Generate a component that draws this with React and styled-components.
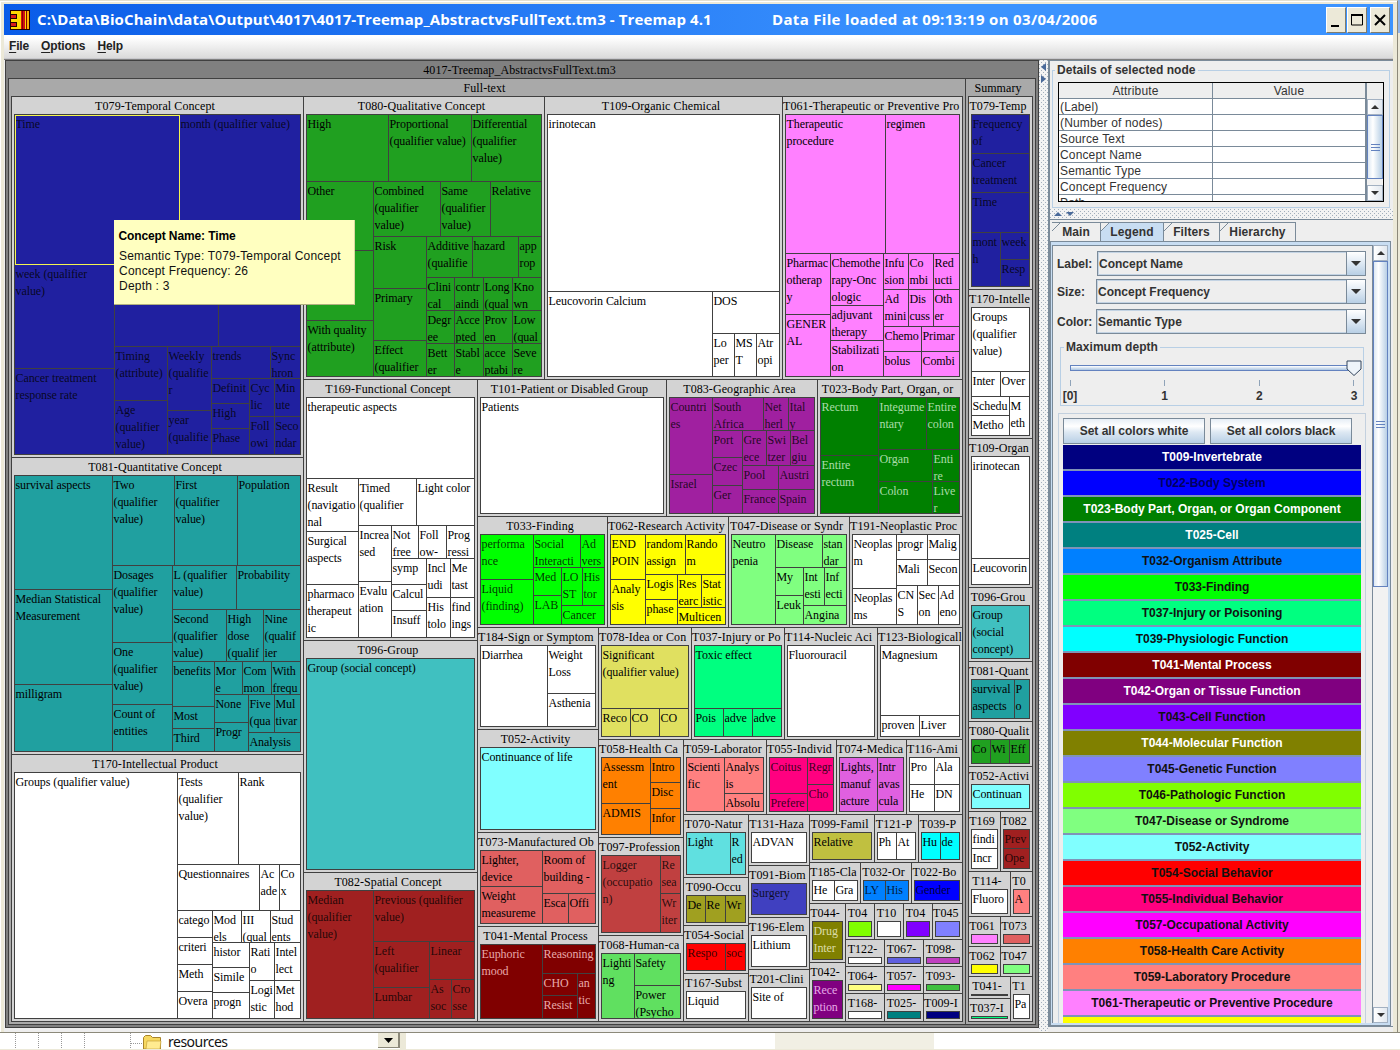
import React from 'react';
import styled, { createGlobalStyle, css } from 'styled-components';

const GlobalStyle = createGlobalStyle`
  * { box-sizing: border-box; }
  body { margin: 0; width: 1400px; height: 1050px; overflow: hidden; background: #ece9d8; }
`;

const LINE = '#404040';
const SANS = '"Liberation Sans", Arial, sans-serif';
const SERIF = '"Liberation Serif", "Times New Roman", serif';

/* ---------- treemap data ---------- */

const split = (dir) => (...items) => {
  const parts = [];
  for (let i = 0; i < items.length - 1; i += 2) parts.push({ size: items[i], node: items[i + 1] });
  parts.push({ node: items[items.length - 1] });
  return { dir, parts };
};
const row = split('row');
const col = split('column');
const group = (title, fill, body = '', ink) => ({ title, fill, body, ink });
const picked = (text) => ({ picked: true, text });

const DIM = 'rgba(0, 0, 0, 0.8)';
const W = '#ffffff';

const fullText = row(
  292, col(
    361, group('T079-Temporal Concept', '#2020a0', col(
      150, row(165, picked('Time'), 'month (qualifier value)'),
      row(
        100, col(104, 'week (qualifier\nvalue)', 'Cancer treatment\nresponse rate'),
        col(
          82, row(104, '', ''),
          row(
            53, col(54, 'Timing\n(attribute)', 'Age\n(qualifier\nvalue)'),
            44, col(64, 'Weekly\n(qualifie\nr', 'year\n(qualifie'),
            col(
              32, row(59, 'trends', 'Sync\nhron'),
              row(
                38, col(25, 'Definit', 25, 'High', 'Phase'),
                col(38, row(25, 'Cyc\nlic', 'Min\nute'), row(25, 'Foll\nowi', 'Seco\nndar'))
              )
            )
          )
        )
      )
    ), DIM),
    297, group('T081-Quantitative Concept', '#20a0a0', row(
      98, col(114, 'survival aspects', 95, 'Median Statistical\nMeasurement', 'milligram'),
      col(
        90, row(62, 'Two\n(qualifier\nvalue)', 63, 'First\n(qualifier\nvalue)', 'Population'),
        row(
          60, col(77, 'Dosages\n(qualifier\nvalue)', 62, 'One\n(qualifier\nvalue)', 'Count of\nentities'),
          col(
            44, row(64, 'L (qualifier\nvalue)', 'Probability'),
            52, row(54, 'Second\n(qualifier\nvalue)', 37, 'High\ndose\n(qualif', 'Nine\n(qualif\nier'),
            row(
              42, col(45, 'benefits', 22, 'Most', 'Third'),
              col(
                33, row(28, 'Mor\ne', 29, 'Com\nmon', 'With\nfrequ'),
                row(
                  34, col(28, 'None', 'Progr'),
                  col(38, row(26, 'Five\n(qua', 'Mul\ntivar'), 'Analysis')
                )
              )
            )
          )
        )
      )
    )),
    group('T170-Intellectual Product', W, row(
      163, 'Groups (qualifier value)',
      col(
        92, row(61, 'Tests\n(qualifier\nvalue)', 'Rank'),
        46, row(82, 'Questionnaires', 20, 'Ac\nade', 'Co\nx'),
        row(
          35, col(27, 'catego', 27, 'criteri', 27, 'Meth', 'Overa'),
          col(
            32, row(29, 'Mod\nels', 29, 'III\n(qual', 'Stud\nents'),
            row(
              37, col(25, 'histor', 25, 'Simile', 'progn'),
              col(38, row(25, 'Rati\no', 'Intel\nlect'), row(25, 'Logi\nstic', 'Met\nhod'))
            )
          )
        )
      )
    ))
  ),
  col(
    283, row(
      241, group('T080-Qualitative Concept', '#20a020', col(
        67, row(82, 'High', 83, 'Proportional\n(qualifier value)', 'Differential\n(qualifier\nvalue)'),
        row(
          67, col(69, 'Other', 70, '', 'With quality\n(attribute)'),
          col(
            55, row(67, 'Combined\n(qualifier\nvalue)', 50, 'Same\n(qualifier\nvalue)', 'Relative'),
            row(
              53, col(52, 'Risk', 52, 'Primary', 'Effect\n(qualifier'),
              col(
                41, row(46, 'Additive\n(qualifie', 46, 'hazard', 'app\nrop'),
                33, row(28, 'Clini\ncal', 29, 'contr\naindi', 29, 'Long\n(qual', 'Kno\nwn'),
                33, row(28, 'Degr\nee', 29, 'Acce\npted', 29, 'Prov\nen', 'Low\n(qual'),
                row(28, 'Bett\ner', 29, 'Stabl\ne', 29, 'acce\nptabi', 'Seve\nre')
              )
            )
          )
        )
      )),
      238, group('T109-Organic Chemical', W, col(
        177, 'irinotecan',
        row(165, 'Leucovorin Calcium', col(42, 'DOS', row(22, 'Lo\nper', 22, 'MS\nT', 'Atr\nopi')))
      )),
      group('T061-Therapeutic or Preventive Pro', '#ff80ff', col(
        139, row(100, 'Therapeutic\nprocedure', 'regimen'),
        row(
          45, col(61, 'Pharmac\notherap\ny', 'GENER\nAL'),
          53, col(52, 'Chemothe\nrapy-Onc\nologic', 35, 'adjuvant\ntherapy', 'Stabilizati\non'),
          col(
            36, row(25, 'Infu\nsion', 25, 'Co\nmbi', 'Red\nucti'),
            37, row(25, 'Ad\nmini', 25, 'Dis\ncuss', 'Oth\ner'),
            25, row(38, 'Chemo', 'Primar'),
            row(38, 'bolus', 'Combi')
          )
        )
      ))
    ),
    row(
      174, col(
        261, group('T169-Functional Concept', W, col(
          81, 'therapeutic aspects',
          row(
            52, col(53, 'Result\n(navigatio\nnal', 53, 'Surgical\naspects', 'pharmaco\ntherapeut\nic'),
            col(
              47, row(58, 'Timed\n(qualifier', 'Light color'),
              row(
                33, col(56, 'Increa\nsed', 'Evalu\nation'),
                col(
                  33, row(27, 'Not\nfree', 28, 'Foll\now-', 'Prog\nressi'),
                  row(
                    35, col(26, 'symp', 26, 'Calcul', 'Insuff'),
                    col(39, row(24, 'Incl\nudi', 'Me\ntast'), row(24, 'His\ntolo', 'find\nings'))
                  )
                )
              )
            )
          )
        )),
        232, group('T096-Group', '#40c0c0', 'Group (social concept)'),
        group('T082-Spatial Concept', '#a02020', row(
          67, 'Median\n(qualifier\nvalue)',
          col(
            51, 'Previous (qualifier\nvalue)',
            row(56, col(46, 'Left\n(qualifier', 'Lumbar'), col(38, 'Linear', row(22, 'As\nsoc', 'Cro\nsse')))
          )
        ), DIM)
      ),
      col(
        137, row(
          189, group('T101-Patient or Disabled Group', W, 'Patients'),
          151, group('T083-Geographic Area', '#a020a0', row(
            43, col(77, 'Countri\nes', 'Israel'),
            col(
              33, row(51, 'South\nAfrica', 25, 'Net\nherl', 'Ital\ny'),
              row(
                30, col(27, 'Port', 28, 'Czec', 'Ger'),
                col(
                  35, row(24, 'Gre\nece', 24, 'Swi\ntzer', 'Bel\ngiu'),
                  24, row(36, 'Pool', 'Austri'),
                  row(36, 'France', 'Spain')
                )
              )
            )
          ), DIM),
          group('T023-Body Part, Organ, or', '#008000', row(
            58, col(58, 'Rectum', 'Entire\nrectum'),
            col(
              52, row(48, 'Integume\nntary', 'Entire\ncolon'),
              32, row(54, 'Organ', 'Enti\nre'),
              row(54, 'Colon', 'Live\nr')
            )
          ), '#a9dca9')
        ),
        111, row(
          130, group('T033-Finding', '#00ff00', row(
            53, col(45, 'performa\nnce', 'Liquid\n(finding)'),
            col(
              33, row(47, 'Social\nInteracti', 'Ad\nvers'),
              row(28, col(28, 'Med', 'LAB'), col(38, row(21, 'LO\nST', 'His\ntor'), 'Cancer'))
            )
          ), DIM),
          121, group('T062-Research Activity', '#ffff00', row(
            35, col(45, 'END\nPOIN', 'Analy\nsis'),
            col(
              40, row(40, 'random\nassign', 'Rando\nm'),
              row(32, col(25, 'Logis', 'phase'), col(33, row(24, 'Res\nearc', 'Stat\nistic'), 'Multicen'))
            )
          )),
          121, group('T047-Disease or Syndr', '#80ff80', row(
            44, 'Neutro\npenia',
            col(
              33, row(47, 'Disease', 'stan\ndar'),
              row(28, col(28, 'My', 'Leuk'), col(38, row(21, 'Int\nesti', 'Inf\necti'), 'Angina'))
            )
          )),
          group('T191-Neoplastic Proc', W, row(
            44, col(54, 'Neoplas\nm', 'Neoplas\nms'),
            col(
              25, row(31, 'progr', 'Malig'),
              26, row(31, 'Mali', 'Secon'),
              row(21, 'CN\nS', 21, 'Sec\non', 'Ad\neno')
            )
          ))
        ),
        row(
          121, col(
            102, group('T184-Sign or Symptom', W, row(67, 'Diarrhea', col(48, 'Weight\nLoss', 'Asthenia'))),
            103, group('T052-Activity', '#80ffff', 'Continuance of life'),
            94, group('T073-Manufactured Ob', '#e06060', row(
              62, col(36, 'Lighter,\ndevice', 'Weight\nmeasureme'),
              col(43, 'Room of\nbuilding -', row(26, 'Esca', 'Offi'))
            )),
            group('T041-Mental Process', '#800000', row(
              62, 'Euphoric\nmood',
              col(29, 'Reasoning', row(35, col(22, 'CHO', 'Resist'), 'an\ntic'))
            ), '#e8aaaa')
          ),
          col(
            112, row(
              93, group('T078-Idea or Con', '#e0e060', col(63, 'Significant\n(qualifier value)', row(29, 'Reco', 29, 'CO', 'CO'))),
              93, group('T037-Injury or Po', '#00ff80', col(63, 'Toxic effect', row(29, 'Pois', 29, 'adve', 'adve'))),
              93, group('T114-Nucleic Aci', W, 'Fluorouracil'),
              group('T123-Biologicall', W, col(70, 'Magnesium', row(39, 'proven', 'Liver')))
            ),
            row(
              85, col(
                98, group('T058-Health Ca', '#ff8000', row(49, col(46, 'Assessm\nent', 'ADMIS'), col(25, 'Intro', 26, 'Disc', 'Infor'))),
                98, group('T097-Profession', '#c04040', row(59, 'Logger\n(occupatio\nn)', col(38, 'Re\nsea', 'Wr\niter')), DIM),
                group('T068-Human-ca', '#60e060', row(33, 'Lighti\nng', col(32, 'Safety', 'Power\n(Psycho')))
              ),
              col(
                75, row(
                  83, group('T059-Laborator', '#ff8080', row(38, 'Scienti\nfic', col(36, 'Analys\nis', 'Absolu'))),
                  70, group('T055-Individ', '#ff0080', row(38, col(36, 'Coitus', 'Prefere'), col(27, 'Regr', 'Cho')), DIM),
                  70, group('T074-Medica', '#e060e0', row(38, 'Lights,\nmanuf\nacture', 'Intr\navas\ncula')),
                  group('T116-Ami', W, col(27, row(25, 'Pro', 'Ala'), row(25, 'He', 'DN')))
                ),
                row(
                  65, col(
                    63, group('T070-Natur', '#60e0e0', row(44, 'Light', 'R\ned')),
                    48, group('T090-Occu', '#a0a020', row(19, 'De', 20, 'Re', 'Wr')),
                    48, group('T054-Social', '#ff0000', row(39, 'Respo', 'soc'), DIM),
                    group('T167-Subst', W, 'Liquid')
                  ),
                  61, col(
                    51, group('T131-Haza', W, 'ADVAN'),
                    52, group('T091-Biom', '#4040c0', 'Surgery', DIM),
                    52, group('T196-Elem', W, 'Lithium'),
                    group('T201-Clini', W, 'Site of')
                  ),
                  col(
                    48, row(
                      65, group('T099-Famil', '#c0c040', 'Relative'),
                      44, group('T121-P', W, row(19, 'Ph', 'At')),
                      group('T039-P', '#00ffff', row(19, 'Hu', 'de'))
                    ),
                    41, row(
                      51, group('T185-Cla', W, row(22, 'He', 'Gra')),
                      51, group('T032-Or', '#0080ff', row(22, 'LY', 'His'), DIM),
                      group('T022-Bo', '#0000ff', 'Gender', DIM)
                    ),
                    row(
                      36, col(
                        59, group('T044-', '#808000', 'Drug\nInter', '#dcdca8'),
                        group('T042-', '#800080', 'Rece\nption', '#e6a8e6')
                      ),
                      col(
                        36, row(
                          29, group('T04', '#80ff00'),
                          29, group('T10', W),
                          29, group('T04', '#8000ff'),
                          group('T045', '#8080ff')
                        ),
                        27, row(39, group('T122-', W), 39, group('T067-', '#6060e0'), group('T098-', '#c040c0')),
                        27, row(39, group('T064-', '#ffff80'), 39, group('T057-', '#ff00ff'), group('T093-', '#40c040')),
                        row(39, group('T168-', W), 39, group('T025-', '#008080'), group('T009-I', '#000080'))
                      )
                    )
                  )
                )
              )
            )
          )
        )
      )
    )
  )
);

const summary = col(
  193, group('T079-Temp', '#2020a0', col(
    39, 'Frequency\nof',
    39, 'Cancer\ntreatment',
    40, 'Time',
    row(29, 'mont\nh', col(27, 'week', 'Resp'))
  ), DIM),
  149, group('T170-Intelle', W, col(
    64, 'Groups\n(qualifier\nvalue)',
    25, row(29, 'Inter', 'Over'),
    row(38, col(19, 'Schedu', 'Metho'), 'M\neth')
  )),
  149, group('T109-Organ', W, col(102, 'irinotecan', 'Leucovorin')),
  74, group('T096-Grou', '#40c0c0', 'Group\n(social\nconcept)'),
  60, group('T081-Quant', '#20a0a0', row(43, 'survival\naspects', 'P\no')),
  45, group('T080-Qualit', '#20a020', row(19, 'Co', 19, 'Wi', 'Eff')),
  45, group('T052-Activi', '#80ffff', 'Continuan'),
  60, row(
    32, group('T169', W, col(19, 'findi', 'Incr')),
    group('T082', '#a02020', col(19, 'Prev', 'Ope'), DIM)
  ),
  45, row(42, group('T114-', W, 'Fluoro'), group('T0', '#ff8080', 'A')),
  30, row(32, group('T061', '#ff80ff'), group('T073', '#e06060')),
  30, row(32, group('T062', '#ffff00'), group('T047', '#80ff80')),
  row(42, col(22, group('T041-', '#800000'), group('T037-I', '#00ff80')), group('T1', W, 'Pa'))
);

const treemap = {
  title: '4017-Treemap_AbstractvsFullText.tm3',
  shade: '#808080',
  body: row(
    957, { title: 'Full-text', shade: '#a9a9a9', body: fullText },
    { title: 'Summary', shade: '#a9a9a9', body: summary }
  ),
};

/* ---------- treemap parts ---------- */

const Split = styled.div`
  flex: 1 1 0;
  display: flex;
  flex-direction: ${(p) => p.$dir};
  min-width: 0;
  min-height: 0;
`;

const Part = styled.div`
  display: flex;
  flex: ${(p) => (p.$size ? `0 0 ${p.$size}px` : '1 1 0')};
  min-width: 0;
  min-height: 0;
`;

const GroupBox = styled.section`
  flex: 1 1 0;
  min-width: 0;
  min-height: 0;
  display: flex;
  flex-direction: column;
  padding: 0 2px 2px;
  background: ${(p) => p.$shade};
  border: solid ${LINE};
  border-width: 1px 0 0 1px;
`;

const GroupTitle = styled.header`
  flex: 0 0 17px;
  min-width: 0;
  display: flex;
  justify-content: safe center;
  margin: 0 -2px;
  padding: 1px 5px 0 0;
  white-space: pre;
  line-height: 16px;
  letter-spacing: 0.08px;
`;

const GroupBody = styled.div`
  flex: 1 1 0;
  min-width: 0;
  min-height: 0;
  display: flex;
  background: ${(p) => p.$fill || 'transparent'};
  color: ${(p) => p.$ink || '#000'};
  border: solid ${LINE};
  border-width: 0 1px 1px 0;
`;

const Cell = styled.div`
  position: relative;
  flex: 1 1 0;
  min-width: 0;
  min-height: 0;
  border: solid ${LINE};
  border-width: 1px 0 0 1px;
  ${(p) => p.$picked && css`
    z-index: 1;
    &::after {
      content: '';
      position: absolute;
      inset: 0 -1px -1px 0;
      border: 1px solid #f4f450;
    }
  `}
`;

const CellText = styled.div`
  height: 100%;
  overflow: hidden;
  padding: 1px 0 0 0.5px;
  white-space: pre;
  line-height: 17px;
  letter-spacing: -0.08px;
`;

const MapFrame = styled.main`
  flex: 0 0 1034px;
  width: 1034px;
  min-width: 0;
  height: 968px;
  display: flex;
  border: solid ${LINE};
  border-width: 0 1px 1px 0;
  font: 12px/17px ${SERIF};
  color: #000;
`;

function TreeNode({ node }) {
  if (node === '') return <Cell />;
  if (typeof node === 'string') return <Cell><CellText>{node}</CellText></Cell>;
  if (node.picked) return <Cell $picked><CellText>{node.text}</CellText></Cell>;
  if (node.dir) {
    return (
      <Split $dir={node.dir}>
        {node.parts.map((part, i) => (
          <Part key={i} $size={part.size}><TreeNode node={part.node} /></Part>
        ))}
      </Split>
    );
  }
  return (
    <GroupBox $shade={node.shade || '#d3d3d3'}>
      <GroupTitle>{node.title}</GroupTitle>
      <GroupBody $fill={node.fill} $ink={node.ink}><TreeNode node={node.body} /></GroupBody>
    </GroupBox>
  );
}

/* ---------- window chrome ---------- */

const Desktop = styled.div`
  position: relative;
  width: 1400px;
  height: 1050px;
  display: flex;
  flex-direction: column;
  overflow: hidden;
  background: linear-gradient(90deg, transparent 1398px, #8fb4ea 1398px) 0 0 / 1400px 33px no-repeat, #ece9d8;
`;

const AppWindow = styled.div`
  flex: 0 0 1032px;
  height: 1032px;
  min-height: 0;
  width: 1398px;
  display: flex;
  flex-direction: column;
  padding: 3px 4px 0;
  background: #ece9d8;
  border-top: 1px solid #e4e0d0;
  border-right: 1px solid #8c897a;
  box-shadow: inset 1px 1px 0 #fff;
`;

const TitleBar = styled.header`
  flex: 0 0 31px;
  display: flex;
  align-items: center;
  padding: 0 3px 0 6px;
  background: linear-gradient(90deg, #0a5ce8, #3b93ff 68%);
  color: #fff;
  font: bold 15px/31px "Open Sans", "Noto Sans", sans-serif;
  white-space: pre;
`;

const TitleText = styled.span`
  width: ${(p) => p.$width}px;
  margin-left: 7px;
  letter-spacing: ${(p) => p.$spacing}px;
`;

const Spacer = styled.span`flex: 1;`;

const CaptionButton = styled.button`
  width: 20px;
  height: 26px;
  margin: 0 0 0 ${(p) => p.$gap || 0}px;
  padding: 0;
  display: grid;
  place-items: center;
  background: #ece9d8;
  border: 1px solid;
  border-color: #fff #807c6c #807c6c #fff;
`;

const MenuBar = styled.nav`
  flex: 0 0 24px;
  display: flex;
  gap: 12px;
  padding: 0 5px;
  background: linear-gradient(#ffffff 10%, #dadada);
  border-bottom: 1px solid #c8c8cc;
  font: bold 12px/23px ${SANS};
  letter-spacing: -0.15px;
  color: #222;
`;

const Mnemonic = styled.span`text-decoration: underline; text-underline-offset: 2px;`;

const Content = styled.div`
  flex: 1 1 0;
  min-height: 0;
  display: flex;
  padding-left: 1px;
  background: #eee;
  border-top: 1px solid #808080;
`;

const dots = css`
  background-color: #f3f3f3;
  background-image: radial-gradient(circle at 0.5px 0.5px, #a3afbc 0.5px, transparent 0.6px),
    radial-gradient(circle at 0.5px 0.5px, #a3afbc 0.5px, transparent 0.6px);
  background-size: 4px 4px;
  background-position: 0 0, 2px 2px;
`;

const VerticalDivider = styled.div`
  flex: 0 0 9px;
  padding: 3px 0 0 2px;
  display: flex;
  flex-direction: column;
  gap: 4px;
  ${dots}
`;

const HorizontalDivider = styled.div`
  flex: 0 0 10px;
  display: flex;
  gap: 4px;
  padding: 3px 0 0 4px;
  ${dots}
`;

const SidePanel = styled.aside`
  flex: 1;
  min-width: 0;
  min-height: 0;
  display: flex;
  flex-direction: column;
  margin-bottom: 5px;
  border: solid #7a8a99;
  border-width: 1px 0 1px 2px;
  background: #eee;
  font: bold 12px/16px ${SANS};
  color: #333;
`;

const Titled = styled.fieldset`
  margin: ${(p) => p.$margin};
  padding: ${(p) => p.$padding};
  height: ${(p) => p.$height}px;
  min-width: 0;
  border: 1px solid #b8cfe5;
  flex: none;
  & > legend { padding: 0 2px; margin-left: ${(p) => p.$legend}px; line-height: 15px; letter-spacing: 0.05px; }
`;

const Table = styled.div`
  display: flex;
  height: 120px;
  border: 1px solid #000;
  font-weight: normal;
  letter-spacing: 0.15px;
`;

const Columns = styled.div`
  flex: 1;
  overflow: hidden;
  display: grid;
  grid-template-columns: 154px 153px;
  grid-auto-rows: 16px;
  background: #fff;
`;

const Th = styled.div`
  text-align: center;
  background: #eee;
  border: solid #7a8a99;
  border-width: 0 1px 1px 0;
  line-height: 17px;
`;

const Td = styled.div`
  padding-left: 1px;
  line-height: 16px;
  border: solid #7a8a99;
  border-width: 0 1px 1px 0;
`;

const ScrollColumn = styled.div`
  width: ${(p) => p.$width}px;
  flex: none;
  display: flex;
  flex-direction: column;
  padding-top: ${(p) => p.$top || 0}px;
  background: #eee;
  border-left: 1px solid #7a8a99;
`;

const ScrollButton = styled.button`
  flex: 0 0 16px;
  display: grid;
  place-items: center;
  padding: 0;
  border: 1px solid #a3b1c2;
  background: linear-gradient(90deg, #fff, #e2e8ef);
`;

const Thumb = styled.div`
  flex: 0 0 ${(p) => p.$height}px;
  display: flex;
  flex-direction: column;
  justify-content: center;
  align-items: center;
  gap: 2px;
  border: 1px solid #6382bf;
  background: linear-gradient(90deg, #dde8f3, #fff 35%, #b8cfe5);
`;

const Grip = styled.i`width: 9px; height: 1px; background: #6382bf;`;
const Trough = styled.div`flex: 1; background: #f2f2f2;`;

const Tabs = styled.div`
  flex: 0 0 22px;
  display: flex;
  align-items: flex-end;
  padding-left: 2px;
  border-top: 1px solid #7a8a99;
`;

const Tab = styled.div`
  width: ${(p) => p.$width}px;
  height: 19px;
  text-align: center;
  line-height: 18px;
  letter-spacing: 0.1px;
  border: solid #7a8a99;
  border-width: 1px 1px 0 0;
  background: ${(p) => (p.$active
    ? 'linear-gradient(135deg, #eee 5px, #7a8a99 5px, #7a8a99 6px, #c8ddf2 6px)'
    : 'linear-gradient(135deg, #eee 5px, #7a8a99 5px, #7a8a99 6px, #eee 6px)')};
`;

const TabPage = styled.div`
  flex: 1 1 0;
  min-height: 0;
  display: flex;
  margin: 0 2px 0 0;
  border: solid #c8ddf2;
  border-width: 4px 3px 3px 2px;
  outline: 1px solid #7a8a99;
  outline-offset: -1px;
`;

const Form = styled.div`
  flex: 1;
  min-width: 0;
  display: flex;
  flex-direction: column;
  border: solid #7a8a99;
  border-width: 1px 0 0 1px;
  overflow: hidden;
`;

const Field = styled.div`
  flex: none;
  display: flex;
  align-items: center;
  height: 25px;
  margin: ${(p) => p.$top}px 6px 0 4px;
`;

const FieldLabel = styled.label`width: ${(p) => p.$width}px; flex: none; padding-top: 1px;`;

const Combo = styled.div`
  flex: 1;
  height: 25px;
  display: flex;
  justify-content: space-between;
  padding-left: 1px;
  line-height: 24px;
  border: 1px solid #7a8a99;
  box-shadow: inset 0 0 0 1px #c3d3e3;
`;

const ComboButton = styled.span`
  width: 19px;
  display: grid;
  place-items: center;
  border-left: 1px solid #7a8a99;
  background: linear-gradient(#fff, #dde8f3 50%, #b8cfe5);
`;

const Track = styled.div`
  position: relative;
  height: 6px;
  margin: 10px 8px 0 9px;
  border: 1px solid #6382bf;
  background: linear-gradient(#fff, #a9c4e2);
`;

const Knob = styled.svg`
  position: absolute;
  right: -8px;
  top: -6px;
`;

const Ticks = styled.div`
  display: flex;
  justify-content: space-between;
  margin: 9px 0 0;
  text-align: center;
  line-height: 14px;
`;

const Tick = styled.span`
  width: 18px;
  &::before { content: ''; display: block; width: 1px; height: 6px; margin: 0 auto 3px; background: #8fa3b8; }
`;

const LegendBox = styled.div`
  flex: 1 1 0;
  min-height: 0;
  overflow: hidden;
  margin: 7px 6px 0 5px;
  padding: 4px 4px 0;
  border: 1px solid #c3d0de;
  border-bottom: 0;
`;

const ButtonRow = styled.div`display: flex; gap: 5px; margin-bottom: 1px;`;

const MetalButton = styled.button`
  width: 142px;
  height: 26px;
  padding: 0;
  border: 1px solid #7a8a99;
  background: linear-gradient(#e6eef6, #fff 30%, #dde8f3 55%, #b8cfe5);
  font: bold 12px/24px ${SANS};
  letter-spacing: 0;
  color: #333;
`;

const LegendRow = styled.div`
  height: 26px;
  width: 298px;
  border-bottom: 2px solid #7f93b8;
  background: ${(p) => p.$fill};
  color: ${(p) => p.$ink};
  line-height: 24px;
  text-align: center;
`;

const Tooltip = styled.div`
  position: absolute;
  z-index: 2;
  left: 114px;
  top: 220px;
  width: 241px;
  height: 85px;
  padding: 9px 0 0 5px;
  background: #ffffc0;
  border-right: 1px solid #d8d8a0;
  border-bottom: 1px solid #b0b080;
  font: 12px/15px ${SANS};
  letter-spacing: 0.21px;
  white-space: pre;
  color: #111;
`;

const TooltipTitle = styled.strong`display: block; margin: 0 0 5px -0.5px; letter-spacing: -0.12px; color: #000;`;

const Behind = styled.footer`
  flex: 1 1 0;
  min-height: 0;
  display: flex;
  margin-bottom: 1px;
  border-top: 1px solid #8c897a;
  background: #fff;
`;

const TreeStrip = styled.div`
  width: 378px;
  display: flex;
  color: #111;
  font: 14px/18px "Noto Sans", Tahoma, sans-serif;
`;

const TreeLabel = styled.span`margin-left: 5px; letter-spacing: -0.5px;`;

const DropButton = styled.span`
  width: 22px;
  height: 15px;
  display: grid;
  place-items: center;
  background: #ece9d8;
  border: solid #8c897a;
  border-width: 0 2px 1px 0;
`;

const Strip = styled.div`
  width: ${(p) => p.$width}px;
  background: ${(p) => p.$fill};
`;

const Arrow = ({ dir, w = 8, h = 5, fill = '#333' }) => {
  const d = {
    down: `M0 0H${w}L${w / 2} ${h}Z`,
    up: `M0 ${h}H${w}L${w / 2} 0Z`,
    left: `M${w} 0V${h}L0 ${h / 2}Z`,
    right: `M0 0V${h}L${w} ${h / 2}Z`,
  }[dir];
  return <svg width={w} height={h}><path d={d} fill={fill} /></svg>;
};

const AppIcon = () => (
  <svg width="20" height="20" shapeRendering="crispEdges">
    <rect width="20" height="20" fill="#200" />
    <rect x="1" y="1" width="10" height="18" fill="#ffd800" />
    <path d="M0 4h7v5H0zM0 12h7v5H0z" fill="#200" />
    <path d="M1 5h5v3H1zM1 13h5v3H1z" fill="#d81818" />
    <rect x="11" y="1" width="4" height="18" fill="#d01010" />
    <rect x="12" y="1" width="1" height="18" fill="#800" />
    <rect x="15" y="1" width="1" height="18" fill="#ffd800" />
    <rect x="16" y="1" width="1" height="18" fill="#800" />
    <rect x="17" y="1" width="2" height="18" fill="#ffb000" />
  </svg>
);

const ATTRIBUTES = ['(Label)', '(Number of nodes)', 'Source Text', 'Concept Name', 'Semantic Type', 'Concept Frequency', 'Path'];

const LEGEND = [
  ['T009-Invertebrate', '#000080', '#fff'],
  ['T022-Body System', '#0000ff', '#000060'],
  ['T023-Body Part, Organ, or Organ Component', '#008000', '#fff'],
  ['T025-Cell', '#008080', '#fff'],
  ['T032-Organism Attribute', '#0080ff'],
  ['T033-Finding', '#00ff00'],
  ['T037-Injury or Poisoning', '#00ff80'],
  ['T039-Physiologic Function', '#00ffff'],
  ['T041-Mental Process', '#800000', '#fff'],
  ['T042-Organ or Tissue Function', '#800080', '#fff'],
  ['T043-Cell Function', '#8000ff'],
  ['T044-Molecular Function', '#808000', '#fff'],
  ['T045-Genetic Function', '#8080ff'],
  ['T046-Pathologic Function', '#80ff00'],
  ['T047-Disease or Syndrome', '#80ff80'],
  ['T052-Activity', '#80ffff'],
  ['T054-Social Behavior', '#ff0000'],
  ['T055-Individual Behavior', '#ff0080'],
  ['T057-Occupational Activity', '#ff00ff'],
  ['T058-Health Care Activity', '#ff8000'],
  ['T059-Laboratory Procedure', '#ff8080'],
  ['T061-Therapeutic or Preventive Procedure', '#ff80ff'],
  ['', '#ffff00'],
];

const FIELDS = [
  { label: 'Label:', value: 'Concept Name', top: 5, width: 40 },
  { label: 'Size:', value: 'Concept Frequency', top: 3, width: 39 },
  { label: 'Color:', value: 'Semantic Type', top: 5, width: 39 },
];

export default function App() {
  return (
    <Desktop>
      <GlobalStyle />
      <AppWindow>
        <TitleBar>
          <AppIcon />
          <TitleText $width={728} $spacing={0.1}>C:\Data\BioChain\data\Output\4017\4017-Treemap_AbstractvsFullText.tm3 - Treemap 4.1</TitleText>
          <TitleText $width={335} $spacing={0.32}>Data File loaded at 09:13:19 on 03/04/2006</TitleText>
          <Spacer />
          <CaptionButton><svg width="12" height="14"><path d="M1 12h8v2H1z" /></svg></CaptionButton>
          <CaptionButton $gap={1}><svg width="14" height="12"><path d="M1 1.5h12M1.5 1v10h11V1" fill="none" stroke="#000" /><path d="M1 0h12v2H1z" /></svg></CaptionButton>
          <CaptionButton $gap={3}><svg width="12" height="12"><path d="M1 1l10 10M11 1L1 11" stroke="#000" strokeWidth="2" /></svg></CaptionButton>
        </TitleBar>
        <MenuBar>
          <span><Mnemonic>F</Mnemonic>ile</span>
          <span><Mnemonic>O</Mnemonic>ptions</span>
          <span><Mnemonic>H</Mnemonic>elp</span>
        </MenuBar>
        <Content>
          <MapFrame><TreeNode node={treemap} /></MapFrame>
          <VerticalDivider>
            <Arrow dir="left" w={5} h={8} fill="#4a6a9a" />
            <Arrow dir="right" w={5} h={8} fill="#4a6a9a" />
          </VerticalDivider>
          <SidePanel>
            <Titled $margin="2px 3px 1px 2px" $padding="4px 5px 0 5px" $height={145} $legend={-3}>
              <legend>Details of selected node</legend>
              <Table>
                <Columns>
                  <Th>Attribute</Th>
                  <Th>Value</Th>
                  {ATTRIBUTES.map((name) => (
                    <React.Fragment key={name}>
                      <Td>{name}</Td>
                      <Td />
                    </React.Fragment>
                  ))}
                </Columns>
                <ScrollColumn $width={17} $top={16}>
                  <ScrollButton><Arrow dir="up" w={8} h={4} /></ScrollButton>
                  <Thumb $height={64}><Grip /><Grip /><Grip /></Thumb>
                  <Trough />
                  <ScrollButton><Arrow dir="down" w={8} h={4} /></ScrollButton>
                </ScrollColumn>
              </Table>
            </Titled>
            <HorizontalDivider>
              <Arrow dir="up" w={8} h={4} fill="#4a6a9a" />
              <Arrow dir="down" w={8} h={4} fill="#4a6a9a" />
            </HorizontalDivider>
            <Tabs>
              <Tab $width={49}>Main</Tab>
              <Tab $width={63} $active>Legend</Tab>
              <Tab $width={56}>Filters</Tab>
              <Tab $width={76}>Hierarchy</Tab>
            </Tabs>
            <TabPage>
              <Form>
                {FIELDS.map((f) => (
                  <Field key={f.label} $top={f.top}>
                    <FieldLabel $width={f.width}>{f.label}</FieldLabel>
                    <Combo>
                      {f.value}
                      <ComboButton><Arrow dir="down" w={10} h={5} /></ComboButton>
                    </Combo>
                  </Field>
                ))}
                <Titled $margin="6px 8px 0 7px" $padding="0" $height={66} $legend={3}>
                  <legend>Maximum depth</legend>
                  <Track>
                    <Knob width="16" height="16"><path d="M1 1h14v8l-7 6.5L1 9z" fill="#eef4fa" stroke="#33445c" /></Knob>
                  </Track>
                  <Ticks><Tick>[0]</Tick><Tick>1</Tick><Tick>2</Tick><Tick>3</Tick></Ticks>
                </Titled>
                <LegendBox>
                  <ButtonRow>
                    <MetalButton>Set all colors white</MetalButton>
                    <MetalButton>Set all colors black</MetalButton>
                  </ButtonRow>
                  {LEGEND.map(([name, fill, ink = '#111']) => (
                    <LegendRow key={name} $fill={fill} $ink={ink}>{name}</LegendRow>
                  ))}
                </LegendBox>
              </Form>
              <ScrollColumn $width={16}>
                <ScrollButton><Arrow dir="up" w={8} h={4} /></ScrollButton>
                <Thumb $height={326}><Grip /><Grip /><Grip /></Thumb>
                <Trough />
                <ScrollButton><Arrow dir="down" w={8} h={4} /></ScrollButton>
              </ScrollColumn>
            </TabPage>
          </SidePanel>
        </Content>
      </AppWindow>
      <Behind>
        <TreeStrip>
          <svg width="163" height="16">
            <path d="M15.5 0V16M38.5 0V16M61.5 0V16M84.5 0V16M130.5 0V16M131 10.5H143" stroke="#999" strokeDasharray="1 1" fill="none" />
            <path d="M143.500 16V4.500l2-2h5l2 2h8v12z" fill="#f6d860" stroke="#a8842a" />
            <path d="M146 16l1-8h14l-1 8z" fill="#ffeb90" stroke="#c09830" strokeWidth=".6" />
          </svg>
          <TreeLabel>resources</TreeLabel>
        </TreeStrip>
        <DropButton><Arrow dir="down" w={9} h={5} fill="#000" /></DropButton>
        <Strip $width={6} $fill="#ece9d8" />
        <Strip $width={369} $fill="#fff" />
        <Strip $width={159} $fill="#f1efe4" />
        <Strip $width={466} $fill="#fff" />
      </Behind>
      <Tooltip>
        <TooltipTitle>Concept Name: Time</TooltipTitle>
        {'Semantic Type: T079-Temporal Concept\nConcept Frequency: 26\nDepth : 3'}
      </Tooltip>
    </Desktop>
  );
}
